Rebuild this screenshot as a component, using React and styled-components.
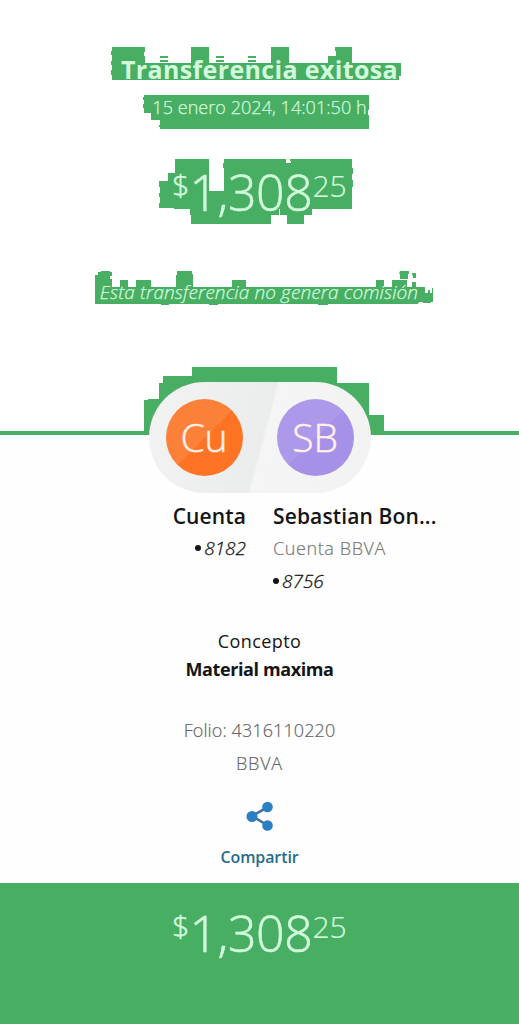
import React from "react";
import styled, { createGlobalStyle } from "styled-components";

export default function App() {
  return (
    <Screen>
      <GlobalStyle />
      <Hero>
        <Backdrop />
        <Title>Transferencia exitosa</Title>
        <DateText>15 enero 2024, 14:01:50 h</DateText>
        <HeroAmount>
          <Amount />
        </HeroAmount>
        <Notice>Esta transferencia no genera comisión</Notice>
      </Hero>

      <Details>
        <Pill>
          <Avatar $from="#ff7424" $to="#fc8138">
            Cu
          </Avatar>
          <Avatar $from="#a592e8" $to="#ad99ea">
            SB
          </Avatar>
        </Pill>

        <Accounts>
          <Account $align="flex-end">
            <Name>Cuenta</Name>
            <Number>
              <Dot />
              8182
            </Number>
          </Account>
          <Account $align="flex-start">
            <Name>Sebastian Bon...</Name>
            <Bank>Cuenta BBVA</Bank>
            <Number>
              <Dot />
              8756
            </Number>
          </Account>
        </Accounts>

        <Label>Concepto</Label>
        <Concept>Material maxima</Concept>
        <Folio>Folio: 4316110220</Folio>
        <Folio $spacing="0.8px">BBVA</Folio>

        <Share>
          <ShareIcon />
          Compartir
        </Share>
      </Details>

      <Footer>
        <Amount />
      </Footer>
    </Screen>
  );
}

function Amount() {
  return (
    <AmountRow>
      <Currency>$</Currency>
      <Whole>1,308</Whole>
      <Cents>25</Cents>
    </AmountRow>
  );
}

// Uneven green blocks behind the header texts
function Backdrop() {
  return (
    <Blocks viewBox="0 0 519 435" aria-hidden="true">
      <path d="M112 47h33v5h-1v4h1v7h46v-16h18v16h62v-16h18v16h39v-7h8v-5h-1v-4h17v16h49v13h-2v4H112v-5h-1v-5h1v-5h-1v-4h1v-6h-1v-4h1z" />
      <path d="M160 56h8v2h-8zm0 4h8v2h-8zm56-4h8v2h-8zm0 4h8v2h-8zm32-4h8v2h-8zm0 4h8v2h-8z" />
      <path d="M144 95h225v15h-1v5h1v14h-209v-2h-1v-2h1v-5h-9v-7h-7v-5h-1v-4h1v-4h-1v-3h1z" />
      <path d="M175 159h34v32h15v-23h-1v-5h1v-4h62v4h5v-2h-1v-2h62v9h1v6h-1v6h1v7h-1v22h-40v6h-8v9h-17v-9h-7v-6h-1v6h-8v9h-80v-9h-1v-6h-16v-1h-15v-5h1v-6h-1v-4h1v-6h-1v-6h9v-8h7z" />
      <path d="M96 275h2v-3h3v-1h9v1h2v4h-2v3h2v8h8v-7h8v7h8v-7h15v7h25v-12h1v-4h15v3h1v13h39v-7h14v7h130v-7h8v7h8v-7h15v7h18v6h3v-3h2v3h2v-5h1v14h-2v1h-8v-1h-4v1H96v1h-1v-29z" />
      <path d="M96 300h322v4h-90v1h-10v-1h-100v1h-9v-1h-40v1h-8v-1H95v-4z" />
      <path d="M400 271h9v3h-1v5h-8v-5h-1zM412 273h4v5h-3zM412 282h4v5h-4z" />
      <path d="M0 431h144v-31h4v-1h11v-16h4v-7h21v7h8v-16h145v16h32v32h15v16H519v4H0z" />
      <path d="M192 367h145v16H184v-7h9z" />
    </Blocks>
  );
}

function ShareIcon() {
  return (
    <svg width="28" height="31" viewBox="0 0 28 31" aria-hidden="true">
      <path
        d="M22 6 6 15l16 9.5"
        fill="none"
        stroke="#426f9e"
        strokeWidth="2.6"
      />
      <g fill="#2a80c2">
        <circle cx="21.5" cy="6" r="5.3" />
        <circle cx="6" cy="15.5" r="5.5" />
        <circle cx="21.5" cy="24.5" r="5.3" />
      </g>
    </svg>
  );
}

const GlobalStyle = createGlobalStyle`
  * {
    box-sizing: border-box;
  }

  body {
    margin: 0;
    background: #fff;
    font-family: "Open Sans", "Noto Sans", sans-serif;
  }

  p, h1 {
    margin: 0;
    white-space: nowrap;
  }
`;

const Screen = styled.main`
  width: 519px;
  height: 1024px;
  display: flex;
  flex-direction: column;
  overflow: hidden;
`;

const Hero = styled.header`
  position: relative;
  isolation: isolate;
  height: 435px;
  flex: none;
  display: flex;
  flex-direction: column;
  align-items: center;
  padding-top: 54px;
  color: #d2fbdc;
`;

const Blocks = styled.svg`
  position: absolute;
  inset: 0;
  z-index: -1;
  fill: #48ae64;
`;

const Title = styled.h1`
  font-size: 25px;
  line-height: 31px;
  font-weight: 700;
  letter-spacing: 0.35px;
`;

const DateText = styled.p`
  margin-top: 9px;
  font-size: 18px;
  line-height: 26px;
  font-weight: 350;
  letter-spacing: 0.05px;
  -webkit-text-stroke: 0.25px currentColor;
`;

const HeroAmount = styled.div`
  margin-top: 42px;
`;

const AmountRow = styled.div`
  height: 60px;
  display: flex;
  align-items: flex-start;
  justify-content: center;
  font-weight: 300;
  color: #d2fbdc;
  -webkit-text-stroke: 0.6px currentColor;
`;

const Currency = styled.span`
  font-size: 30px;
  line-height: 45px;
`;

const Whole = styled.span`
  font-size: 50px;
  line-height: 60px;
  letter-spacing: -0.4px;
`;

const Cents = styled.span`
  font-size: 30px;
  line-height: 47px;
  -webkit-text-stroke-width: 0.2px;
`;

const Notice = styled.p`
  margin: 59px 0 0 -1px;
  font-size: 19px;
  line-height: 22px;
  font-style: italic;
  font-weight: 330;
  letter-spacing: 0.1px;
  -webkit-text-stroke: 0.25px currentColor;
`;

const Details = styled.section`
  height: 448px;
  flex: none;
  display: flex;
  flex-direction: column;
  align-items: center;
  background: #fefefe;
  color: #151515;
`;

const Pill = styled.div`
  position: relative;
  flex: none;
  width: 222px;
  height: 111px;
  margin-top: -53px;
  display: flex;
  align-items: center;
  justify-content: space-between;
  padding: 0 17px;
  border-radius: 56px;
  background: linear-gradient(105deg, #f3f3f3 0%, #ebecec 51%, #f5f5f5 52%, #f2f2f2 100%);
`;

const Avatar = styled.div`
  width: 77px;
  height: 77px;
  padding-bottom: 2px;
  display: flex;
  align-items: center;
  justify-content: center;
  border-radius: 50%;
  background: linear-gradient(135deg, ${(p) => p.$to} 50%, ${(p) => p.$from} 50.5%);
  color: #fff0e8;
  font-size: 39px;
  font-weight: 300;
  -webkit-text-stroke: 0.5px currentColor;
`;

const Accounts = styled.div`
  width: 100%;
  height: 105px;
  margin-top: 7px;
  display: grid;
  grid-template-columns: 246px 1fr;
  column-gap: 27px;
`;

const Account = styled.div`
  display: flex;
  flex-direction: column;
  align-items: ${(p) => p.$align};
`;

const Name = styled.p`
  font-size: 21px;
  line-height: 32px;
  font-weight: 600;
  letter-spacing: 0.13px;
`;

const Number = styled.p`
  display: flex;
  align-items: center;
  font-size: 19px;
  line-height: 32px;
  font-style: italic;
  font-weight: 350;
  -webkit-text-stroke: 0.3px currentColor;
`;

const Dot = styled.span`
  width: 6px;
  height: 6px;
  margin-right: 3px;
  border-radius: 50%;
  background: #151515;
`;

const Bank = styled.p`
  font-size: 18px;
  line-height: 33px;
  font-weight: 330;
  letter-spacing: 0.6px;
  color: #777;
  -webkit-text-stroke: 0.2px currentColor;
`;

const Label = styled.p`
  margin-top: 22px;
  font-size: 18px;
  line-height: 28px;
  font-weight: 370;
  letter-spacing: 0.4px;
`;

const Concept = styled.p`
  margin-bottom: 31px;
  font-size: 18px;
  line-height: 28px;
  font-weight: 700;
  letter-spacing: -0.4px;
`;

const Folio = styled.p`
  font-size: 18px;
  line-height: 33px;
  font-weight: 340;
  letter-spacing: ${(p) => p.$spacing || "0.1px"};
  color: #666;
  -webkit-text-stroke: 0.2px currentColor;
`;

const Share = styled.button`
  margin-top: 21px;
  padding: 0;
  display: flex;
  flex-direction: column;
  align-items: center;
  gap: 13px;
  border: 0;
  background: none;
  color: #276b8c;
  font: 600 16px/24px "Open Sans", sans-serif;
  letter-spacing: -0.1px;
`;

const Footer = styled.footer`
  height: 141px;
  flex: none;
  padding-top: 20px;
  background: #48ae64;
`;
